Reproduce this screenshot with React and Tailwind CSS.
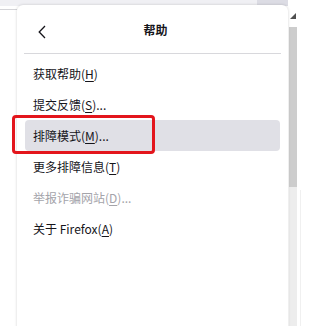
import React from "react";

const items = [
  { label: "获取帮助(", key: "H", tail: ")" },
  { label: "提交反馈(", key: "S", tail: ")..." },
  { label: "排障模式(", key: "M", tail: ")...", active: true },
  { label: "更多排障信息(", key: "T", tail: ")" },
  { label: "举报诈骗网站(", key: "D", tail: ")...", disabled: true },
  { label: "关于 Firefox(", key: "A", tail: ")" },
];

export default function App() {
  return (
    <div
      className="relative w-[324px] h-[326px] overflow-hidden bg-white"
      style={{ fontFamily: '"Noto Sans CJK SC", "Noto Sans", sans-serif' }}
    >
      {/* background toolbar strip */}
      <div className="flex h-[6px] w-full">
        <div className="w-[257px] bg-[#f0f0f4]" />
        <div className="w-[31px] bg-[#dcdce4]" />
        <div className="flex-1 bg-white" />
      </div>
      <div className="absolute left-0 top-[9px] h-px w-[17px] bg-[#d4d4d8]" />

      {/* page scrollbar */}
      <div className="absolute left-[289px] top-[6px] bottom-0 w-[8px] flex flex-col bg-[#f4f4f4]">
        <div className="h-[21px] flex items-start justify-center pt-[7px] bg-white">
          <svg width="6" height="6" viewBox="0 0 6 6">
            <path d="M0 0 L6 6 L0 6 Z" fill="#505050" transform="rotate(-90 3 3)" />
          </svg>
        </div>
        <div className="h-[160px] bg-[#cdcdcd]" />
        <div className="flex-1 bg-[#ededed]" />
      </div>
      <div className="absolute left-[300px] top-[190px] bottom-0 w-px bg-[#f0f0f0]" />

      {/* panel */}
      <div className="absolute left-[17px] top-[5px] w-[271px] h-[340px] bg-white rounded-t-[6px] shadow-[0_0_3px_rgba(0,0,0,0.18)] text-[#15141a]">
        <div className="relative h-[48px] flex items-center justify-center">
          <svg
            className="absolute left-[21px] top-[20px]"
            width="8"
            height="14"
            viewBox="0 0 8 14"
          >
            <path d="M7 1 L1.2 7 L7 13" fill="none" stroke="#15141a" strokeWidth="1.3" />
          </svg>
          <span className="text-[12px] font-bold ml-[6px] mt-[2px]">帮助</span>
        </div>
        <div className="mx-[7px] h-px bg-[#d8d8dc]" />
        <div className="pt-[4px] flex flex-col">
          {items.map((it, i) => (
            <div
              key={i}
              className={
                "mx-[8px] h-[31px] px-[8px] flex items-center rounded-[4px] text-[12px] " +
                (it.active ? "bg-[#e0e0e6] " : "") +
                (it.disabled ? "text-[#a4a4aa]" : "text-[#15141a]")
              }
            >
              <span className="whitespace-pre">
                {it.label}
                <span className="underline underline-offset-2">{it.key}</span>
                {it.tail}
              </span>
            </div>
          ))}
        </div>
      </div>

      {/* red annotation box */}
      <div className="absolute left-[12px] top-[115px] w-[143px] h-[39px] border-[3px] border-[#e3151c] rounded-[4px]" />
    </div>
  );
}
